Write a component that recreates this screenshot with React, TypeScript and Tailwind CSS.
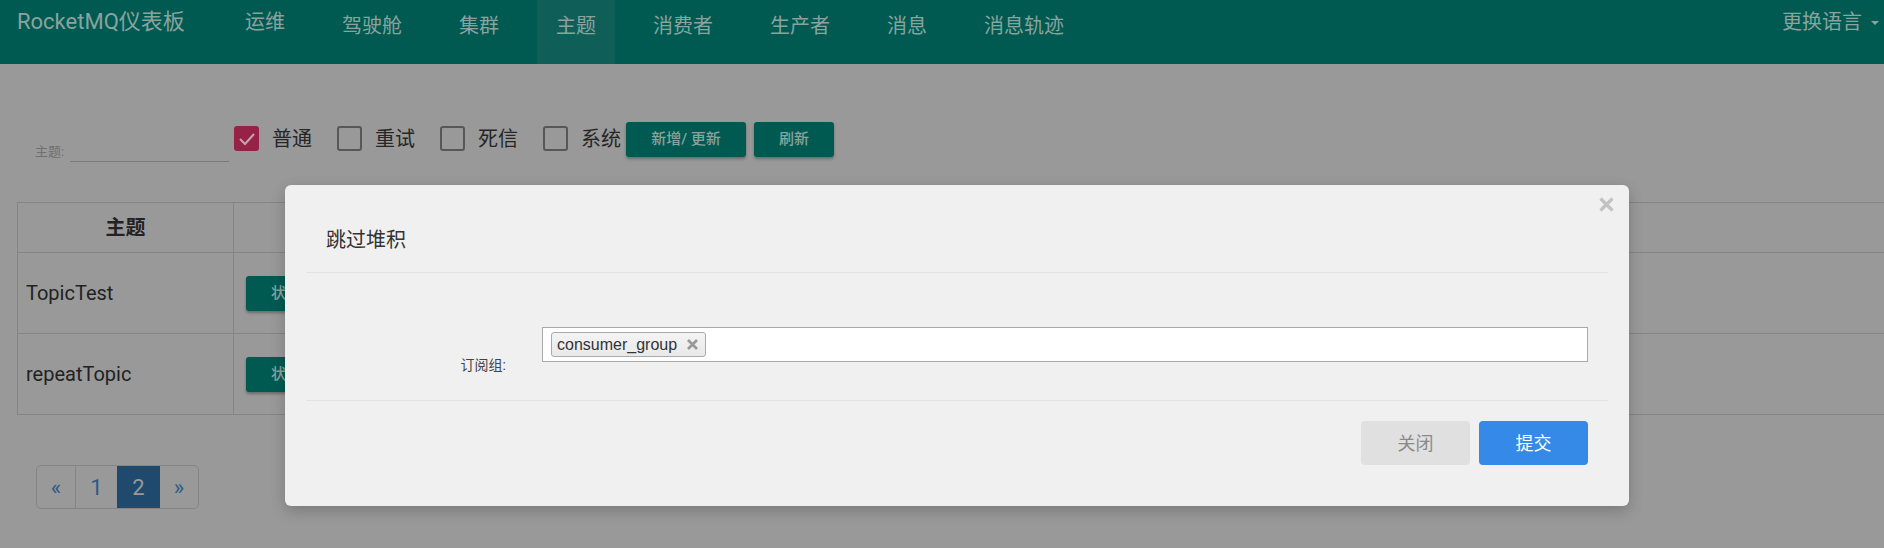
import React from 'react';

const navItems = ['运维', '驾驶舱', '集群', '主题', '消费者', '生产者', '消息', '消息轨迹'];
const checks = [
  { label: '普通', checked: true },
  { label: '重试', checked: false },
  { label: '死信', checked: false },
  { label: '系统', checked: false },
];

function CheckBox({ label, checked, last }: { label: string; checked: boolean; last: boolean }) {
  return (
    <div className={`flex h-[25px] items-center ${last ? 'mr-[5px]' : 'mr-[25px]'}`}>
      {checked ? (
        <div className="flex h-[25px] w-[25px] items-center justify-center rounded-[3px] bg-[#962248]">
          <svg width="18" height="14" viewBox="0 0 18 14">
            <polyline points="2,7 7,12 16,2" fill="none" stroke="#c9a3af" strokeWidth="2" />
          </svg>
        </div>
      ) : (
        <div className="h-[25px] w-[25px] rounded-[3px] border-2 border-[#575757]" />
      )}
      <span className="ml-[13px] text-[20px] leading-[20px] text-[#262626]">{label}</span>
    </div>
  );
}

export default function App() {
  return (
    <div className="relative h-[548px] w-[1884px] overflow-hidden bg-[#999999] font-[Roboto,'Noto_Sans_CJK_SC',sans-serif]">
      {/* Navbar */}
      <nav className="flex h-[64px] bg-[#005a52] text-[#8aa39d]">
        <div className="w-[226px] shrink-0 pl-[17px] pt-[11px] text-[22px] leading-[22px]">RocketMQ仪表板</div>
        <div className="flex gap-[19px]">
          {navItems.map((t, i) => (
            <div
              key={t}
              className={`px-[19px] text-[20px] leading-[20px] ${i === 0 ? 'pt-[12px]' : 'pt-[16px]'} ${t === '主题' ? 'bg-[#0f5f58]' : ''}`}
            >
              {t}
            </div>
          ))}
        </div>
        <div className="ml-auto flex items-start pr-[5px] pt-[12px] text-[20px] leading-[20px]">
          <span>更换语言</span>
          <svg className="ml-[9px] mt-[9px]" width="8" height="4" viewBox="0 0 8 4">
            <polygon points="0,0 8,0 4,4" fill="#8aa39d" />
          </svg>
        </div>
      </nav>

      {/* Toolbar */}
      <div className="mt-[58px] flex h-[40px] items-start pl-[35px]">
        <div className="flex items-start">
          <span className="mt-[23px] w-[35px] text-[13px] leading-[13px] text-[#707070]">主题:</span>
          <div className="h-[40px] w-[159px] border-b border-[#7a7a7a]" />
        </div>
        <div className="ml-[5px] mt-[4px] flex">
          {checks.map((c, i) => (
            <CheckBox key={c.label} label={c.label} checked={c.checked} last={i === checks.length - 1} />
          ))}
        </div>
        <button className="h-[35px] w-[120px] rounded-[3px] bg-[#005a52] text-[15px] font-medium text-[#8aa39d] shadow-[0_2px_3px_rgba(0,0,0,0.3)]">
          新增/ 更新
        </button>
        <button className="ml-[8px] h-[35px] w-[80px] rounded-[3px] bg-[#005a52] text-[15px] font-medium text-[#8aa39d] shadow-[0_2px_3px_rgba(0,0,0,0.3)]">
          刷新
        </button>
      </div>

      {/* Table */}
      <div className="ml-[17px] mt-[40px] w-[1900px] border border-[#858585] text-[#222]">
        <div className="flex h-[50px] border-b border-[#858585]">
          <div className="flex w-[216px] items-center justify-center border-r border-[#858585] text-[20px] font-bold">主题</div>
          <div className="flex-1" />
        </div>
        {['TopicTest', 'repeatTopic'].map((t, i) => (
          <div key={t} className={`flex ${i === 0 ? 'h-[81px] border-b border-[#858585]' : 'h-[80px]'}`}>
            <div className="flex w-[216px] items-center border-r border-[#858585] pl-[8px] text-[20px]">{t}</div>
            <div className="flex flex-1 items-center pl-[12px]">
              <button className="h-[35px] rounded-[3px] bg-[#005a52] px-[25px] text-[15px] font-medium text-[#8aa39d] shadow-[0_2px_3px_rgba(0,0,0,0.3)]">
                状态
              </button>
            </div>
          </div>
        ))}
      </div>

      {/* Pagination */}
      <div className="ml-[36px] mt-[50px] flex h-[44px] w-[163px] overflow-hidden rounded-[5px] border border-[#858585] text-[22px] text-[#2a5a85]">
        <div className="flex w-[39px] items-center justify-center border-r border-[#858585]">«</div>
        <div className="flex w-[41px] items-center justify-center">1</div>
        <div className="flex w-[43px] items-center justify-center bg-[#1f4a6e] text-[#999999]">2</div>
        <div className="flex w-[38px] items-center justify-center">»</div>
      </div>

      {/* Modal */}
      <div className="absolute left-[285px] top-[185px] h-[321px] w-[1344px] rounded-[6px] bg-[#f0f0f0] shadow-[0_5px_15px_rgba(0,0,0,0.2)]">
        <svg className="absolute left-[1313px] top-[11px]" width="17" height="17" viewBox="0 0 17 17">
          <path d="M2.5 2.5 L14.5 14.5 M14.5 2.5 L2.5 14.5" stroke="#c2c2c2" strokeWidth="3.2" />
        </svg>
        <div className="mx-[21px] h-[88px] border-b border-[#e2e2e2] pl-[20px] pt-[45px] text-[20px] leading-[20px] text-[#333]">
          跳过堆积
        </div>
        <div className="mx-[21px] flex h-[128px] items-start border-b border-[#e2e2e2]">
          <div className="mt-[85px] w-[200px] text-right text-[14px] leading-[14px] text-[#444]">订阅组:</div>
          <div className="ml-[36px] mt-[54px] flex h-[35px] w-[1046px] items-start border border-[#a9a9a9] bg-white pl-[8px] pt-[4px]">
            <div className="flex h-[25px] items-center rounded-[3px] border border-[#aaaaaa] bg-gradient-to-b from-[#f4f4f4] to-[#e9e9e9] pl-[5px] pr-[6px] font-['Liberation_Sans',Arial,sans-serif] text-[16px] leading-[16px] text-[#333]">
              <span>consumer_group</span>
              <svg className="ml-[9px]" width="13" height="13" viewBox="0 0 13 13">
                <path d="M2 2 L11 11 M11 2 L2 11" stroke="#999" strokeWidth="2.8" />
              </svg>
            </div>
          </div>
        </div>
        <div className="mx-[21px] flex justify-end gap-[9px] pr-[20px] pt-[20px]">
          <button className="h-[44px] w-[109px] rounded-[4px] bg-[#e0e0e0] text-[18px] text-[#8a8a8a]">关闭</button>
          <button className="h-[44px] w-[109px] rounded-[4px] bg-[#348ae6] text-[18px] text-white">提交</button>
        </div>
      </div>
    </div>
  );
}
